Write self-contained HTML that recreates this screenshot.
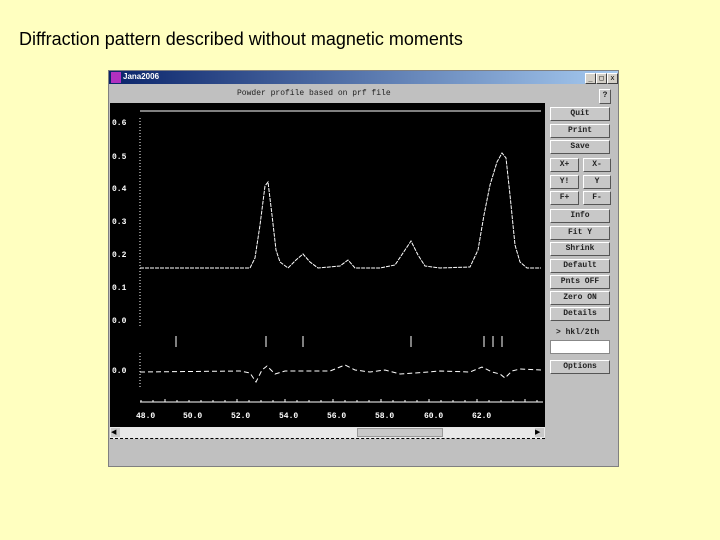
<!DOCTYPE html>
<html><head><style>
body{margin:0;width:720px;height:540px;background:#ffffc0;position:relative;overflow:hidden;font-family:"Liberation Sans",sans-serif}
.h{position:absolute;left:19px;top:29px;font-size:18px;color:#000}
.win{position:absolute;left:108px;top:70px;width:511px;height:397px;background:#c0c0c0;border:1px solid #808080;box-sizing:border-box}
.tb{position:absolute;left:0;top:0;width:509px;height:13px;background:linear-gradient(90deg,#0a246a,#a6caf0)}
.tb span{position:absolute;left:14px;top:1px;color:#fff;font:bold 8px "Liberation Sans",sans-serif}
.ic{position:absolute;left:2px;top:1px;width:10px;height:11px;background:#b030c0}
.wb{position:absolute;top:2px;width:9px;height:9px;background:#d4d0c8;border:1px solid #fff;border-right-color:#404040;border-bottom-color:#404040;font:7px monospace;line-height:9px;text-align:center}
.plot{position:absolute;left:110px;top:103px;width:435px;height:324px;background:#000}
.btn{position:absolute;background:#c8c8c8;border:1px solid #fff;border-right-color:#555;border-bottom-color:#555;font:bold 8px "Liberation Mono",monospace;color:#222;text-align:center;line-height:12px;box-sizing:border-box;height:14px}
.t{font:bold 8px "Liberation Mono",monospace;fill:#fff}
</style></head><body>
<div class="h">Diffraction pattern described without magnetic moments</div>
<div class="win">
<div class="tb"><div class="ic"></div><span>Jana2006</span></div>
<div class="wb" style="left:476px">_</div><div class="wb" style="left:487px">□</div><div class="wb" style="left:498px">x</div>
<div style="position:absolute;left:128px;top:18px;font:8px 'Liberation Mono',monospace;color:#222">Powder profile based on prf file</div>
</div>
<div class="plot"></div>
<svg style="position:absolute;left:0;top:0" width="720" height="540">
<g class="t">
<text x="112" y="125">0.6</text><text x="112" y="159">0.5</text><text x="112" y="191">0.4</text><text x="112" y="224">0.3</text><text x="112" y="257">0.2</text><text x="112" y="290">0.1</text><text x="112" y="323">0.0</text><text x="112" y="373">0.0</text>
<text x="136" y="418">48.0</text><text x="183" y="418">50.0</text><text x="231" y="418">52.0</text><text x="279" y="418">54.0</text><text x="327" y="418">56.0</text><text x="375" y="418">58.0</text><text x="424" y="418">60.0</text><text x="472" y="418">62.0</text>
</g>
<line x1="140" y1="118" x2="140" y2="326" stroke="#fff" stroke-dasharray="1 2"/>
<line x1="140" y1="353" x2="140" y2="388" stroke="#fff" stroke-dasharray="1 2"/>
<line x1="140" y1="111" x2="541" y2="111" stroke="#fff"/>
<line x1="140" y1="402" x2="543" y2="402" stroke="#fff"/>
<g stroke="#fff"><line x1="176" y1="336" x2="176" y2="347"/><line x1="266" y1="336" x2="266" y2="347"/><line x1="303" y1="336" x2="303" y2="347"/><line x1="411" y1="336" x2="411" y2="347"/><line x1="484" y1="336" x2="484" y2="347"/><line x1="493" y1="336" x2="493" y2="347"/><line x1="502" y1="336" x2="502" y2="347"/></g>
<polyline fill="none" stroke="#fff" stroke-width="1" stroke-dasharray="4 1" points="140,268 250,268 255,258 260,225 265,186 268,182 272,215 276,250 280,262 288,268 296,260 303,254 310,262 318,268 340,266 348,260 355,268 380,268 395,265 405,250 411,241 418,255 425,266 440,268 470,267 478,250 484,215 490,185 497,162 502,153 506,158 510,195 515,245 520,262 527,268 541,268"/>
<polyline fill="none" stroke="#fff" stroke-width="1" stroke-dasharray="5 3" points="140,372 240,371 250,373 256,382 262,370 267,366 275,374 285,371 330,371 345,365 355,370 370,372 385,370 400,374 415,373 440,371 470,372 482,367 492,372 500,374 505,378 512,371 520,369 541,370"/>
<g stroke="#fff">
<path d="M141 402v-2M153 402v-2M165 402v-3M177 402v-2M189 402v-2M201 402v-2M213 402v-2M225 402v-2M237 402v-3M249 402v-2M261 402v-2M273 402v-2M285 402v-3M297 402v-2M309 402v-2M321 402v-2M333 402v-3M345 402v-2M357 402v-2M369 402v-2M381 402v-3M393 402v-2M405 402v-2M417 402v-2M429 402v-3M441 402v-2M453 402v-2M465 402v-2M477 402v-3M489 402v-2M501 402v-2M513 402v-2M525 402v-3M537 402v-2"/>
</g>
</svg>
<div style="position:absolute;left:110px;top:427px;width:435px;height:11px;background:#e8e8e8;border-bottom:1px dashed #000"></div>
<div style="position:absolute;left:111px;top:428px;width:9px;height:9px;background:#c8c8c8;font:7px sans-serif;line-height:9px">◀</div>
<div style="position:absolute;left:535px;top:428px;width:9px;height:9px;background:#c8c8c8;font:7px sans-serif;line-height:9px">▶</div>
<div style="position:absolute;left:357px;top:428px;width:86px;height:9px;background:#c8c8c8;border:1px solid #999;box-sizing:border-box"></div>
<div class="btn" style="left:599px;top:89px;width:12px;height:15px">?</div>
<div class="btn" style="left:550px;top:107px;width:60px">Quit</div>
<div class="btn" style="left:550px;top:124px;width:60px">Print</div>
<div class="btn" style="left:550px;top:140px;width:60px">Save</div>
<div class="btn" style="left:550px;top:158px;width:29px">X+</div><div class="btn" style="left:583px;top:158px;width:28px">X-</div>
<div class="btn" style="left:550px;top:175px;width:29px">Y!</div><div class="btn" style="left:583px;top:175px;width:28px">Y</div>
<div class="btn" style="left:550px;top:191px;width:29px">F+</div><div class="btn" style="left:583px;top:191px;width:28px">F-</div>
<div class="btn" style="left:550px;top:209px;width:60px">Info</div>
<div class="btn" style="left:550px;top:226px;width:60px">Fit Y</div>
<div class="btn" style="left:550px;top:242px;width:60px">Shrink</div>
<div class="btn" style="left:550px;top:259px;width:60px">Default</div>
<div class="btn" style="left:550px;top:275px;width:60px">Pnts OFF</div>
<div class="btn" style="left:550px;top:291px;width:60px">Zero ON</div>
<div class="btn" style="left:550px;top:307px;width:60px">Details</div>
<div style="position:absolute;left:556px;top:328px;font:bold 8px 'Liberation Mono',monospace;color:#222">&gt; hkl/2th</div>
<div style="position:absolute;left:550px;top:340px;width:60px;height:14px;background:#fff;border:1px solid #888;box-sizing:border-box"></div>
<div class="btn" style="left:550px;top:360px;width:60px">Options</div>
</body></html>
